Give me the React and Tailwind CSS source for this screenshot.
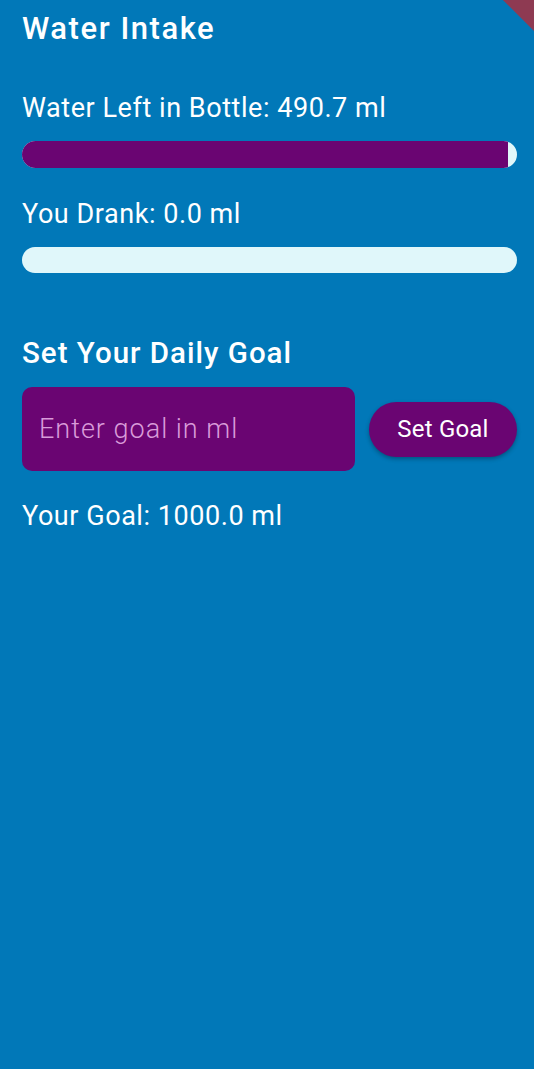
export default function App() {
  const left = 490.7;
  const max = 500;
  const pct = (left / max) * 100;
  return (
    <div
      className="relative w-[534px] h-[1069px] overflow-hidden bg-[#0178B8] text-white"
      style={{ fontFamily: "Roboto, 'Noto Sans', sans-serif" }}
    >
      <div className="absolute -right-[22px] -top-[22px] w-[44px] h-[44px] rotate-45 bg-[#8E3A52]" />
      <div className="flex flex-col pl-[22px] pr-[17px] pt-[11px]">
        <h1 className="text-[31px] leading-[36px] font-medium tracking-[1.55px]">Water Intake</h1>

        <p className="mt-[46px] text-[27px] leading-[30px] tracking-[0.55px]">Water Left in Bottle: 490.7 ml</p>
        <div className="mt-[18px] h-[27px] w-full rounded-full bg-[#E0F7FA] overflow-hidden">
          <div className="h-full bg-[#6A0572]" style={{ width: `${pct}%` }} />
        </div>

        <p className="mt-[31px] text-[27px] leading-[30px] tracking-[0.55px]">You Drank: 0.0 ml</p>
        <div className="mt-[18px] h-[26px] w-full rounded-full bg-[#E0F7FA]" />

        <h2 className="mt-[64px] text-[29.5px] leading-[32px] font-medium tracking-[1px]">Set Your Daily Goal</h2>

        <div className="mt-[18px] flex items-center gap-[14px]">
          <div className="w-[333px] h-[84px] rounded-[10px] bg-[#6A0572] flex items-center pl-[17px]">
            <span className="text-[27px] font-light tracking-[1px] text-[#D99BD9]">Enter goal in ml</span>
          </div>
          <button className="w-[148px] h-[55px] rounded-full bg-[#6A0572] text-[24px] tracking-[0.2px] text-white shadow-[0_2px_4px_rgba(0,0,0,0.3)]">
            Set Goal
          </button>
        </div>

        <p className="mt-[30px] text-[27px] leading-[30px] tracking-[0.55px]">Your Goal: 1000.0 ml</p>
      </div>
    </div>
  );
}
